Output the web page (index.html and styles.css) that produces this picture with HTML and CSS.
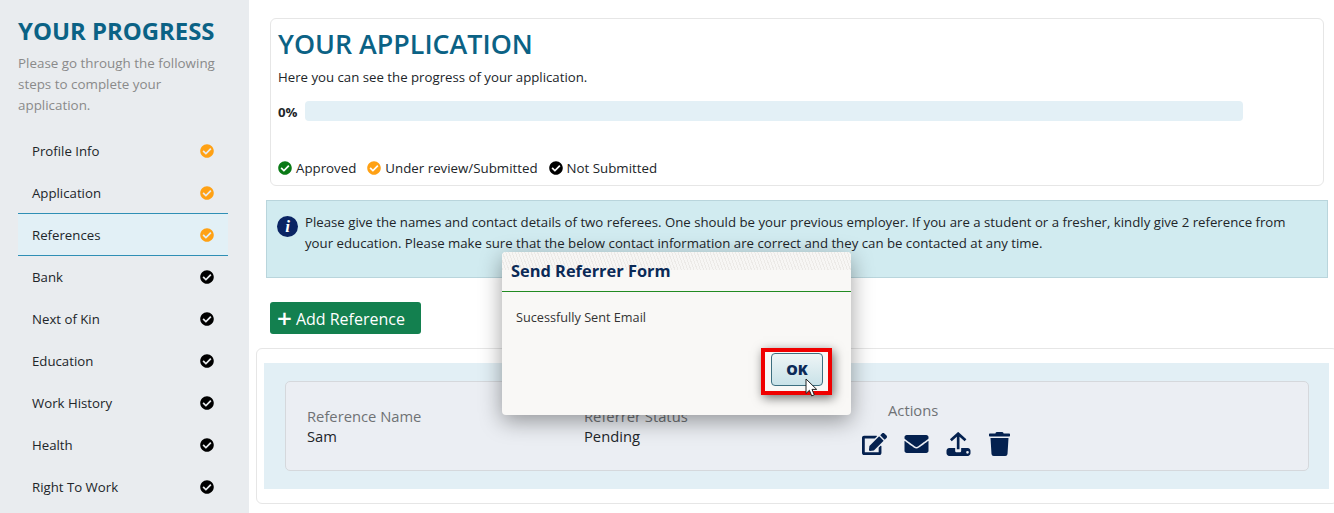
FILE: index.html
```html
<!DOCTYPE html>
<html lang="en">
  <head>
    <meta charset="UTF-8" />
    <meta name="viewport" content="width=device-width, initial-scale=1" />
    <title>Your Application</title>
    <link rel="stylesheet" href="styles.css">
  </head>
  <body>
    <svg class="defs" width="0" height="0">
      <symbol id="check" viewBox="0 0 512 512">
        <path d="M504 256c0 136.967-111.033 248-248 248S8 392.967 8 256 119.033 8 256 8s248 111.033 248 248zM227.314 387.314l184-184c6.248-6.248 6.248-16.379 0-22.627l-22.627-22.627c-6.248-6.249-16.379-6.249-22.628 0L216 308.118l-70.059-70.059c-6.248-6.248-16.379-6.248-22.628 0l-22.627 22.627c-6.248 6.248-6.248 16.379 0 22.627l104 104c6.249 6.249 16.379 6.249 22.628.001z" />
      </symbol>
    </svg>

    <div class="app">
      <aside class="sidebar">
        <h2 class="side-title">YOUR PROGRESS</h2>
        <p class="side-text">Please go through the following steps to complete your application.</p>
        <ul class="steps">
          <li class="step">Profile Info <svg class="tick orange"><use href="#check" /></svg></li>
          <li class="step">Application <svg class="tick orange"><use href="#check" /></svg></li>
          <li class="step active">References <svg class="tick orange"><use href="#check" /></svg></li>
          <li class="step">Bank <svg class="tick black"><use href="#check" /></svg></li>
          <li class="step">Next of Kin <svg class="tick black"><use href="#check" /></svg></li>
          <li class="step">Education <svg class="tick black"><use href="#check" /></svg></li>
          <li class="step">Work History <svg class="tick black"><use href="#check" /></svg></li>
          <li class="step">Health <svg class="tick black"><use href="#check" /></svg></li>
          <li class="step">Right To Work <svg class="tick black"><use href="#check" /></svg></li>
        </ul>
      </aside>

      <main class="content">
        <section class="progress-card">
          <h1 class="page-title">YOUR APPLICATION</h1>
          <p class="page-text">Here you can see the progress of your application.</p>
          <div class="progress-row">
            <b class="percent">0%</b>
            <div class="bar"></div>
          </div>
          <div class="legend">
            <span class="legend-item"><svg class="tick green"><use href="#check" /></svg>Approved</span>
            <span class="legend-item"><svg class="tick orange"><use href="#check" /></svg>Under review/Submitted</span>
            <span class="legend-item"><svg class="tick black"><use href="#check" /></svg>Not Submitted</span>
          </div>
        </section>

        <div class="notice">
          <span class="info-icon">i</span>
          <p>Please give the names and contact details of two referees. One should be your previous employer. If you are a student or a fresher, kindly give 2 reference from your education. Please make sure that the below contact information are correct and they can be contacted at any time.</p>
        </div>

        <button class="add-btn"><span class="plus">+</span> Add Reference</button>

        <section class="ref-card">
          <div class="ref-band">
            <div class="ref-row">
              <div class="col col-name">
                <div class="col-label">Reference Name</div>
                <div class="col-value">Sam</div>
              </div>
              <div class="col col-status">
                <div class="col-label">Referrer Status</div>
                <div class="col-value">Pending</div>
              </div>
              <div class="col col-actions">
                <div class="col-label">Actions</div>
                <div class="actions">
                  <svg class="action" viewBox="0 0 576 512"><path d="M402.6 83.2l90.2 90.2c3.8 3.8 3.8 10 0 13.8L274.4 405.6l-92.8 10.3c-12.4 1.4-22.9-9.1-21.5-21.5l10.3-92.8L388.8 83.2c3.8-3.8 10-3.8 13.8 0zm162-22.9l-48.8-48.8c-15.2-15.2-39.9-15.2-55.2 0l-35.4 35.4c-3.8 3.8-3.8 10 0 13.8l90.2 90.2c3.8 3.8 10 3.8 13.8 0l35.4-35.4c15.2-15.3 15.2-40 0-55.2zM384 346.2V448H64V128h229.8c3.2 0 6.2-1.3 8.5-3.5l40-40c7.6-7.6 2.2-20.5-8.5-20.5H48C21.5 64 0 85.5 0 112v352c0 26.5 21.5 48 48 48h352c26.5 0 48-21.5 48-48V306.2c0-10.7-12.9-16-20.5-8.5l-40 40c-2.2 2.3-3.5 5.3-3.5 8.5z" /></svg>
                  <svg class="action" viewBox="0 0 512 512"><path d="M502.3 190.8c3.9-3.1 9.7-.2 9.7 4.7V400c0 26.5-21.5 48-48 48H48c-26.5 0-48-21.5-48-48V195.6c0-5 5.7-7.8 9.7-4.7 22.4 17.4 52.1 39.5 154.1 113.6 21.1 15.4 56.7 47.8 92.2 47.6 35.7.3 72-32.8 92.3-47.6 102-74.1 131.6-96.3 154-113.7zM256 320c23.2.4 56.6-29.2 73.4-41.4 132.7-96.3 142.8-104.7 173.4-128.7 5.8-4.5 9.2-11.5 9.2-18.9v-19c0-26.5-21.5-48-48-48H48C21.5 64 0 85.5 0 112v19c0 7.4 3.4 14.3 9.2 18.9 30.6 23.9 40.7 32.4 173.4 128.7 16.8 12.2 50.2 41.8 73.4 41.4z" /></svg>
                  <svg class="action" viewBox="0 0 72 72"><path d="M13 25 35 5l22 20M35 5v47" fill="none" stroke="#04214f" stroke-width="8" /><path d="M8 48h18v8c0 3 2 5 5 5h8c3 0 5-2 5-5v-8h20c4 0 8 4 8 8v8c0 4-4 8-8 8H8c-4 0-8-4-8-8v-8c0-4 4-8 8-8zm55 9a4 4 0 1 0 0 8 4 4 0 0 0 0-8z" fill-rule="evenodd" /></svg>
                  <svg class="action trash" viewBox="0 0 448 512"><path d="M432 32H312l-9.4-18.7A24 24 0 0 0 281.1 0H166.8a23.72 23.72 0 0 0-21.4 13.3L136 32H16A16 16 0 0 0 0 48v32a16 16 0 0 0 16 16h416a16 16 0 0 0 16-16V48a16 16 0 0 0-16-16zM53.2 467a48 48 0 0 0 47.9 45h245.8a48 48 0 0 0 47.9-45L416 128H32z" /></svg>
                </div>
              </div>
            </div>
          </div>
        </section>
      </main>
    </div>

    <div class="modal">
      <div class="modal-noise"></div>
      <h3 class="modal-title">Send Referrer Form</h3>
      <p class="modal-text">Sucessfully Sent Email</p>
      <div class="modal-foot">
        <div class="highlight">
          <button class="ok-btn">OK</button>
        </div>
      </div>
    </div>

    <svg class="cursor" viewBox="0 0 12 19"><path d="M1 1v14.5l3.4-3.2 2.3 5.6 2.6-1.1-2.3-5.4h4.7z" fill="#fff" stroke="#222" stroke-width="1" stroke-linejoin="round" /></svg>
  </body>
</html>
```

FILE: styles.css
```css
* {
  box-sizing: border-box;
}
html, body {
  margin: 0;
  height: 100%;
  overflow: hidden;
}
body {
  font-family: "Open Sans", "Noto Sans", sans-serif;
  font-size: 13.22px;
  color: #212529;
  background: #fff;
}
.defs {
  position: absolute;
}
.app {
  display: flex;
  height: 513px;
}

/* sidebar */
.sidebar {
  width: 249px;
  flex: none;
  background: #e9ecef;
  padding: 15px 21px 0 18px;
}
.side-title {
  margin: 0;
  font-size: 23.9px;
  line-height: 32px;
  font-weight: 700;
  color: #0b6285;
  white-space: nowrap;
}
.side-text {
  margin: 6px 0 0;
  font-size: 13.4px;
  line-height: 21px;
  color: #8a8a8a;
}
.steps {
  list-style: none;
  margin: 14px 0 0;
  padding: 0;
}
.step {
  height: 42px;
  display: flex;
  align-items: center;
  justify-content: space-between;
  padding: 0 14px 0 14px;
  color: #212529;
}
.step.active {
  height: 43px;
  margin-top: -1px;
  background: #e2f0f6;
  border-top: 1px solid #2f8fb5;
  border-bottom: 1px solid #2f8fb5;
}
.tick {
  width: 14px;
  height: 14px;
  flex: none;
}
.orange { fill: #ffa114; }
.black { fill: #000; }
.green { fill: #0a7a16; }

/* main column */
.content {
  flex: 1;
  min-width: 0;
  padding: 18px 0 0 7px;
}
.progress-card {
  margin: 0 10px 0 14px;
  height: 168px;
  border: 1px solid #e6e6e6;
  border-radius: 6px;
  padding: 7px 7px 0;
}
.page-title {
  margin: 0;
  font-size: 26.85px;
  line-height: 36px;
  font-weight: 600;
  color: #0b6285;
}
.page-text {
  margin: 5px 0 0;
  line-height: 20px;
}
.progress-row {
  display: flex;
  align-items: center;
  gap: 7px;
  margin-top: 14px;
}
.percent {
  width: 20px;
  padding-top: 2px;
}
.bar {
  width: 938px;
  height: 20px;
  background: #e3f0f6;
  border-radius: 4px;
}
.legend {
  display: flex;
  gap: 11px;
  margin-top: 37px;
  font-size: 13.3px;
}
.legend-item {
  display: flex;
  align-items: center;
  gap: 4px;
  line-height: 20px;
}
.notice {
  margin: 14px 6px 0 10px;
  height: 78px;
  background: #d1ebf0;
  border: 1px solid #b9d5dc;
  display: flex;
  gap: 7px;
  padding: 11px 30px 0 10px;
}
.notice p {
  margin: 0;
  line-height: 21px;
}
.info-icon {
  width: 21px;
  height: 21px;
  flex: none;
  margin-top: 4px;
  border-radius: 50%;
  background: #0a2463;
  color: #fff;
  font-family: "Liberation Serif", serif;
  font-style: italic;
  font-weight: 700;
  font-size: 17px;
  line-height: 21px;
  text-align: center;
}
.add-btn {
  display: flex;
  align-items: center;
  gap: 4px;
  margin: 24px 0 0 14px;
  width: 151px;
  height: 32px;
  padding: 2px 0 0 7px;
  border: none;
  border-radius: 3px;
  background: #13804f;
  color: #fff;
  font-family: inherit;
  font-size: 16px;
  white-space: nowrap;
}
.plus {
  font-size: 26px;
  font-weight: 600;
  line-height: 20px;
  margin-top: -2px;
}
.ref-card {
  margin: 14px -4px 0 0;
  height: 156px;
  border: 1px solid #e6e6e6;
  border-radius: 6px;
  padding: 14px 8px 14px 7px;
}
.ref-band {
  height: 126px;
  background: #e2eff5;
  padding: 18px 20px 18px 21px;
}
.ref-row {
  height: 90px;
  display: flex;
  background: #ebeef3;
  border: 1px solid #d5d8dc;
  border-radius: 5px;
}
.col {
  font-size: 14.75px;
}
.col-name {
  width: 298px;
  padding: 24px 0 0 21px;
}
.col-status {
  width: 304px;
  padding: 24px 0 0 0;
}
.col-actions {
  padding-top: 18px;
}
.col-label {
  color: #6f7275;
  line-height: 20px;
}
.col-value {
  line-height: 20px;
}
.actions {
  display: flex;
  align-items: center;
  gap: 17px;
  margin: 12px 0 0 -26px;
}
.action {
  width: 25px;
  height: 24px;
  fill: #04214f;
}
.action.trash {
  margin-left: -1px;
}

/* modal sits over the page */
.modal {
  position: absolute;
  left: 502px;
  top: 252px;
  width: 349px;
  height: 163px;
  background: #f9f8f6;
  border-radius: 4px;
  box-shadow: 0 6px 22px rgba(0, 0, 0, 0.38);
  overflow: hidden;
}
.modal-noise {
  position: absolute;
  left: 0;
  right: 0;
  top: 0;
  height: 18px;
  background: repeating-linear-gradient(70deg, #eceae7 0 1px, #f7f6f4 1px 3px);
}
.modal-title {
  position: relative;
  margin: 0;
  height: 40px;
  padding: 7px 0 0 9px;
  border-bottom: 1px solid #228b22;
  font-size: 16.4px;
  line-height: 24px;
  font-weight: 700;
  color: #0b2a57;
}
.modal-text {
  margin: 16px 0 0 14px;
  font-size: 12.7px;
  line-height: 18px;
  color: #333;
}
.modal-foot {
  display: flex;
  justify-content: flex-end;
  margin: 22px 19px 0 0;
}
.highlight {
  width: 71px;
  height: 47px;
  border: 4px solid #f00000;
  padding: 1px 0 0 6px;
  box-shadow: 2px 3px 10px rgba(0, 0, 0, 0.55);
}
.ok-btn {
  display: block;
  width: 52px;
  height: 33px;
  padding: 0;
  border: 1px solid #3d6f80;
  border-radius: 4px;
  background: linear-gradient(#eef5f6, #c9e2e8);
  color: #0b2a57;
  font-family: inherit;
  font-size: 14.5px;
  font-weight: 800;
}
.cursor {
  position: absolute;
  left: 805px;
  top: 378px;
  width: 12px;
  height: 19px;
}
```
